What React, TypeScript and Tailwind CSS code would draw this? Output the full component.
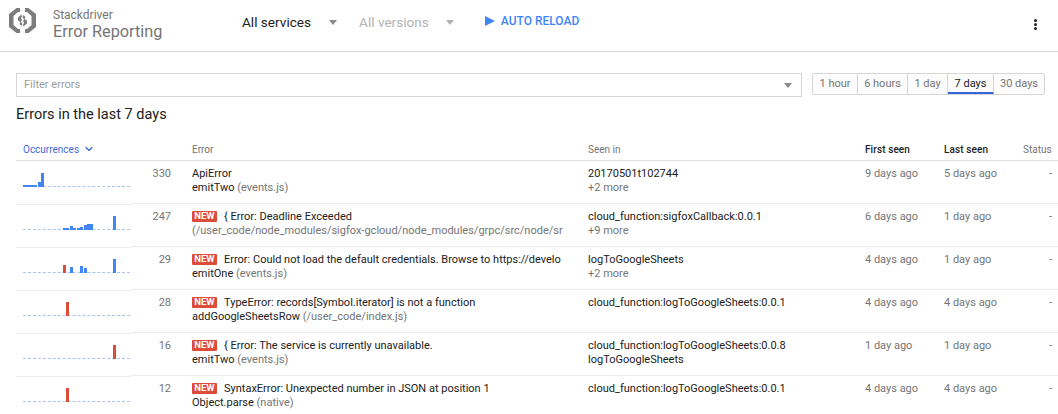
import { ChevronDown } from 'lucide-react';

interface Bar {
  x: number;
  h: number;
  red?: boolean;
}

interface ErrorRow {
  count: number;
  isNew?: boolean;
  title: string;
  fn?: string;
  loc: string;
  seen: string;
  seenSub: string;
  seenSubDark?: boolean;
  first: string;
  last: string;
  bars: Bar[];
}

const rows: ErrorRow[] = [
  {
    count: 330,
    title: 'ApiError',
    fn: 'emitTwo',
    loc: '(events.js)',
    seen: '20170501t102744',
    seenSub: '+2 more',
    first: '9 days ago',
    last: '5 days ago',
    bars: [
      { x: 0, h: 2 }, { x: 3, h: 2 }, { x: 6, h: 2 }, { x: 9, h: 2 }, { x: 11, h: 2 },
      { x: 15, h: 5 }, { x: 18, h: 14 },
    ],
  },
  {
    count: 247,
    isNew: true,
    title: '{ Error: Deadline Exceeded',
    loc: '(/user_code/node_modules/sigfox-gcloud/node_modules/grpc/src/node/sr',
    seen: 'cloud_function:sigfoxCallback:0.0.1',
    seenSub: '+9 more',
    first: '6 days ago',
    last: '1 day ago',
    bars: [
      { x: 40, h: 2 }, { x: 43, h: 2 }, { x: 47, h: 4 }, { x: 50, h: 2 }, { x: 54, h: 2 },
      { x: 57, h: 3 }, { x: 61, h: 5 }, { x: 64, h: 6 }, { x: 67, h: 6 }, { x: 90, h: 14 },
    ],
  },
  {
    count: 29,
    isNew: true,
    title: 'Error: Could not load the default credentials. Browse to https://develo',
    fn: 'emitOne',
    loc: '(events.js)',
    seen: 'logToGoogleSheets',
    seenSub: '+2 more',
    first: '4 days ago',
    last: '1 day ago',
    bars: [
      { x: 40, h: 8, red: true }, { x: 47, h: 6 }, { x: 57, h: 7 }, { x: 61, h: 5 }, { x: 90, h: 14 },
    ],
  },
  {
    count: 28,
    isNew: true,
    title: 'TypeError: records[Symbol.iterator] is not a function',
    fn: 'addGoogleSheetsRow',
    loc: '(/user_code/index.js)',
    seen: 'cloud_function:logToGoogleSheets:0.0.1',
    seenSub: '',
    first: '4 days ago',
    last: '4 days ago',
    bars: [{ x: 43, h: 14, red: true }],
  },
  {
    count: 16,
    isNew: true,
    title: '{ Error: The service is currently unavailable.',
    fn: 'emitTwo',
    loc: '(events.js)',
    seen: 'cloud_function:logToGoogleSheets:0.0.8',
    seenSub: 'logToGoogleSheets',
    seenSubDark: true,
    first: '1 day ago',
    last: '1 day ago',
    bars: [{ x: 90, h: 14, red: true }],
  },
  {
    count: 12,
    isNew: true,
    title: 'SyntaxError: Unexpected number in JSON at position 1',
    fn: 'Object.parse',
    loc: '(native)',
    seen: 'cloud_function:logToGoogleSheets:0.0.1',
    seenSub: '',
    first: '4 days ago',
    last: '4 days ago',
    bars: [{ x: 43, h: 14, red: true }],
  },
];

const ranges = [
  { label: '1 hour', cls: 'w-[45px]' },
  { label: '6 hours', cls: 'w-[50px]' },
  { label: '1 day', cls: 'w-[40px]' },
  { label: '7 days', cls: 'w-[46px] border-b-2 border-b-[#3367d6] pt-[2px] text-[#212121]' },
  { label: '30 days', cls: 'w-[50px] border-r-0' },
];

function Logo() {
  return (
    <svg width="27" height="25" viewBox="0 0 27 25" className="mt-[8px] shrink-0 self-start">
      <path d="M11 0H7.500L0 6v13l7.500 6H11v-4H9L4.500 17V8L9 4h2z" fill="#7d7d7d" />
      <path d="M16 0h3.500L27 6v13l-7.500 6H16v-4h2l4.500-4V8L18 4h-2z" fill="#7d7d7d" />
      <path d="M12.500 6.500 9 9.500v3l2.500 1.500-1 2 2 2 1-2-1.500-2.500 1-1.500-1-2 1-1.500z" fill="#7d7d7d" />
      <path d="M14.500 18.500l3.500-3v-3L15.500 11l1-2-2-2-1 2 1.500 2.500-1 1.500 1 2-1 1.500z" fill="#7d7d7d" />
    </svg>
  );
}

function Spark({ bars }: { bars: Bar[] }) {
  return (
    <div className="relative h-[15px] w-[107px]">
      <div className="absolute inset-x-0 bottom-0 border-b border-dashed border-[#a9c4f2]" />
      {bars.map((b) => (
        <div
          key={b.x}
          className={`absolute bottom-0 w-[3px] ${b.red ? 'bg-[#dd4b39]' : 'bg-[#4285f4]'}`}
          style={{ left: b.x, height: b.h }}
        />
      ))}
    </div>
  );
}

function Caret({ light }: { light?: boolean }) {
  return (
    <span
      className={`h-0 w-0 border-x-[4px] border-t-[5px] border-x-transparent ${light ? 'border-t-[#b0b0b0]' : 'border-t-[#8a8a8a]'}`}
    />
  );
}

export default function App() {
  return (
    <div className="h-[414px] w-[1058px] overflow-hidden bg-white font-['Roboto',sans-serif] text-[11px] text-[#212121]">
      <header className="flex h-[52px] items-center border-b border-[#d6d6d6] pl-[9px] pr-[21px]">
        <Logo />
        <div className="ml-[17px] -mt-[1px] flex w-[189px] flex-col">
          <span className="text-[12px] leading-[13px] text-[#757575]">Stackdriver</span>
          <span className="text-[16.3px] leading-[20px] text-[#757575]">Error Reporting</span>
        </div>
        <div className="flex h-[44px] items-center self-start">
          <span className="text-[13.6px] text-[#212121]">All services</span>
          <span className="ml-[18px] flex"><Caret /></span>
          <span className="ml-[22px] text-[13.6px] text-[#b3b3b3]">All versions</span>
          <span className="ml-[17px] flex"><Caret light /></span>
          <span className="ml-[31px] -mt-[2px] flex items-center gap-[6px] text-[12px] font-medium text-[#4285f4]">
            <span className="h-0 w-0 border-y-[5px] border-l-[10px] border-y-transparent border-l-[#4285f4]" />
            AUTO RELOAD
          </span>
        </div>
        <span className="ml-auto -mt-[3px] flex flex-col gap-px">
          <span className="size-[3px] rounded-full bg-[#212121]" />
          <span className="size-[3px] rounded-full bg-[#212121]" />
          <span className="size-[3px] rounded-full bg-[#212121]" />
        </span>
      </header>

      <div className="mt-[21px] flex pl-[16px]">
        <div className="flex h-[24px] w-[786px] items-center justify-between border border-[#d6d6d6] pl-[7px] pr-[9px] text-[11px] text-[#9e9e9e]">
          <span>Filter errors</span>
          <Caret />
        </div>
        <div className="ml-[10px] flex h-[22px] rounded-[2px] border border-[#d6d6d6] bg-[#fcfcfc] text-[11px] text-[#757575]">
          {ranges.map((r) => (
            <span
              key={r.label}
              className={`flex items-center justify-center border-r border-[#d6d6d6] ${r.cls}`}
            >
              {r.label}
            </span>
          ))}
        </div>
      </div>

      <h2 className="ml-[16px] mt-[9px] text-[14.5px] leading-[18px] text-[#212121]">Errors in the last 7 days</h2>

      <div className="mt-[14px] pl-[16px]">
        <div className="flex h-[23px] items-center border-b border-[#e0e0e0] text-[10px] text-[#757575]">
          <span className="flex w-[176px] items-center gap-[4px] pl-[7px] text-[#3f6ad8]">
            Occurrences <ChevronDown size={12} strokeWidth={2.5} />
          </span>
          <span className="w-[396px]">Error</span>
          <span className="w-[277px]">Seen in</span>
          <span className="w-[79px] font-medium tracking-[0.1px] text-[#212121]">First seen</span>
          <span className="w-[79px] font-medium tracking-[0.1px] text-[#212121]">Last seen</span>
          <span>Status</span>
        </div>
        {rows.map((row) => (
          <div key={row.count} className="flex h-[43px]">
            <div className="h-[44px] w-[115px] shrink-0 border-b border-[#ececec] pl-[7px] pt-[11px]">
              <Spark bars={row.bars} />
            </div>
            <div className="flex h-[43px] flex-1 border-b border-[#ececec] pt-[6px] leading-[14px]">
              <div className="w-[40px] text-right text-[#757575]">{row.count}</div>
              <div className="ml-[21px] w-[396px] overflow-hidden">
                <div className="flex h-[14px] items-center whitespace-nowrap">
                  {row.isNew && (
                    <span className="mb-[2px] mr-[7px] inline-flex h-[11px] w-[25px] items-center justify-center rounded-[1px] bg-[#dd4b39] text-[9.5px] font-bold text-white">NEW</span>
                  )}
                  <span>{row.title}</span>
                </div>
                <div className="whitespace-nowrap">
                  {row.fn && <span>{row.fn} </span>}
                  <span className="text-[#757575]">{row.loc}</span>
                </div>
              </div>
              <div className="w-[277px]">
                <div>{row.seen}</div>
                <div className={row.seenSubDark ? '' : 'text-[#757575]'}>{row.seenSub}</div>
              </div>
              <div className="w-[79px] text-[#757575]">{row.first}</div>
              <div className="w-[79px] text-[#757575]">{row.last}</div>
              <div className="w-[29px] text-right text-[#757575]">-</div>
            </div>
          </div>
        ))}
      </div>
    </div>
  );
}
